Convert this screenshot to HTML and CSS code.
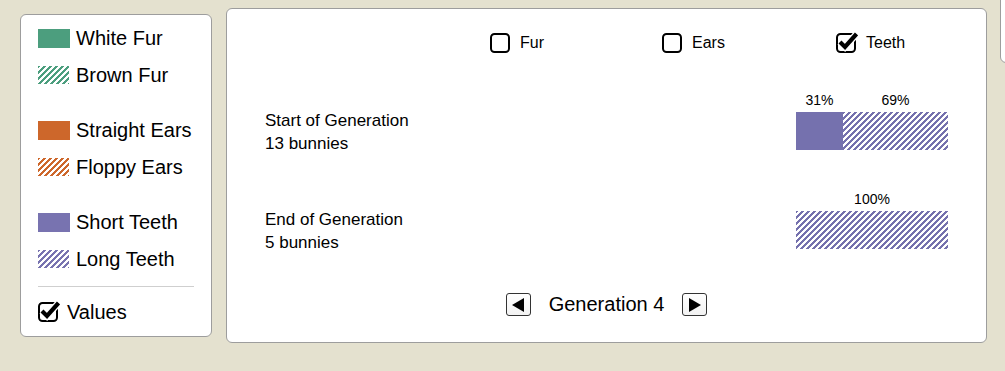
FILE: index.html
```html
<!DOCTYPE html>
<html lang="en">
<head>
    <meta charset="UTF-8">
    <title>Bunny Proportions</title>
    <link rel="stylesheet" href="styles.css">
</head>
<body>
    <div class="screen">
        <div class="panel legend">
            <div class="legend-item"><span class="swatch fur"></span>White Fur</div>
            <div class="legend-item"><span class="swatch fur hatch"></span>Brown Fur</div>
            <div class="legend-item group"><span class="swatch ears"></span>Straight Ears</div>
            <div class="legend-item"><span class="swatch ears hatch"></span>Floppy Ears</div>
            <div class="legend-item group"><span class="swatch teeth"></span>Short Teeth</div>
            <div class="legend-item"><span class="swatch teeth hatch"></span>Long Teeth</div>
            <hr class="divider">
            <div class="legend-item values">
                <svg class="checkbox" viewBox="0 0 22 22" width="22" height="22">
                    <rect x="1" y="3" width="18" height="18" rx="3.5" fill="none" stroke="#000" stroke-width="2"/>
                    <path d="M4 11 L9 16 L20.5 3" fill="none" stroke="#fff" stroke-width="7"/>
                    <path d="M4 11 L9 16 L20.5 3" fill="none" stroke="#000" stroke-width="4.2"/>
                </svg>
                Values
            </div>
        </div>

        <div class="panel main">
            <div class="toggles">
                <label class="toggle">
                    <svg class="checkbox" viewBox="0 0 22 22" width="22" height="22">
                        <rect x="1" y="3" width="18" height="18" rx="3.5" fill="none" stroke="#000" stroke-width="2"/>
                    </svg>
                    Fur
                </label>
                <label class="toggle">
                    <svg class="checkbox" viewBox="0 0 22 22" width="22" height="22">
                        <rect x="1" y="3" width="18" height="18" rx="3.5" fill="none" stroke="#000" stroke-width="2"/>
                    </svg>
                    Ears
                </label>
                <label class="toggle">
                    <svg class="checkbox" viewBox="0 0 22 22" width="22" height="22">
                        <rect x="1" y="3" width="18" height="18" rx="3.5" fill="none" stroke="#000" stroke-width="2"/>
                        <path d="M4 11 L9 16 L20.5 3" fill="none" stroke="#fff" stroke-width="7"/>
                        <path d="M4 11 L9 16 L20.5 3" fill="none" stroke="#000" stroke-width="4.2"/>
                    </svg>
                    Teeth
                </label>
            </div>

            <div class="gen-row">
                <div class="gen-label">Start of Generation<br>13 bunnies</div>
                <div class="bar-values">
                    <span style="width: 31%">31%</span>
                    <span style="width: 69%">69%</span>
                </div>
                <div class="bar">
                    <span class="seg solid" style="width: 31%"></span>
                    <span class="seg hatch" style="width: 69%"></span>
                </div>
            </div>

            <div class="gen-row second">
                <div class="gen-label">End of Generation<br>5 bunnies</div>
                <div class="bar-values">
                    <span style="width: 100%">100%</span>
                </div>
                <div class="bar">
                    <span class="seg hatch" style="width: 100%"></span>
                </div>
            </div>

            <div class="nav">
                <button class="nav-btn">
                    <svg viewBox="0 0 12 14" width="12" height="14"><path d="M0 7 L12 0 L12 14 Z" fill="#000"/></svg>
                </button>
                <span class="gen-title">Generation 4</span>
                <button class="nav-btn">
                    <svg viewBox="0 0 12 14" width="12" height="14"><path d="M12 7 L0 0 L0 14 Z" fill="#000"/></svg>
                </button>
            </div>
        </div>

        <div class="panel stub"></div>
    </div>
</body>
</html>
```

FILE: styles.css
```css
html, body {
    margin: 0;
    padding: 0;
    overflow: hidden;
}
body {
    font-family: "Liberation Sans", Arial, sans-serif;
    color: #000;
    background-color: rgb(228, 225, 207);
    width: 1005px;
    height: 371px;
}
.screen {
    display: flex;
    align-items: flex-start;
}
.panel {
    background-color: #fff;
    border: 1px solid #9d9d9d;
    border-radius: 6px;
    box-sizing: border-box;
    flex-shrink: 0;
}

/* legend */
.legend {
    margin-left: 20px;
    margin-top: 14px;
    width: 192px;
    height: 323px;
    padding: 11px 17px 0 17px;
}
.legend-item {
    display: flex;
    align-items: center;
    gap: 6px;
    height: 24px;
    font-size: 20px;
    margin-bottom: 13px;
}
.legend-item.group {
    margin-top: 31px;
}
.swatch {
    display: inline-block;
    width: 32px;
    height: 19px;
    flex-shrink: 0;
}
.fur { --c: #4c9e7e; background-color: var(--c); }
.ears { --c: #cd672b; background-color: var(--c); }
.teeth { --c: #7873b0; background-color: var(--c); }
.hatch {
    background: linear-gradient(135deg, var(--c) 25%, #fff 25%, #fff 50%, var(--c) 50%, var(--c) 75%, #fff 75%);
    background-size: 6px 6px;
}
.swatch.hatch {
    width: 31px;
    height: 18px;
    margin-right: 1px;
}
.divider {
    border: none;
    border-top: 1px solid #cfcfcf;
    margin: 15px 0 13px 0;
}
.legend-item.values {
    gap: 7px;
    margin-bottom: 0;
}
.checkbox {
    flex-shrink: 0;
    margin-top: -2px;
}

/* main panel */
.main {
    margin-left: 14px;
    margin-top: 8px;
    width: 761px;
    height: 335px;
    padding: 22px 38px 0 38px;
}
.toggles {
    display: flex;
    padding-left: 225px;
    height: 24px;
}
.toggle {
    display: flex;
    align-items: center;
    gap: 8px;
    font-size: 16px;
    width: 172px;
    flex-shrink: 0;
}
.toggle:nth-child(2) {
    width: 174px;
}
.toggle:last-child {
    width: auto;
}
.gen-row {
    display: grid;
    grid-template-columns: 1fr 152px;
    grid-template-rows: 16px 38px;
    row-gap: 4px;
    margin-top: 37px;
}
.gen-row.second {
    margin-top: 41px;
}
.gen-label {
    grid-column: 1;
    grid-row: 2;
    align-self: center;
    font-size: 17px;
    line-height: 23px;
    margin-top: 1px;
}
.bar-values {
    grid-column: 2;
    grid-row: 1;
    display: flex;
    font-size: 14px;
    line-height: 16px;
}
.bar-values span {
    text-align: center;
}
.bar {
    grid-column: 2;
    grid-row: 2;
    display: flex;
    --c: #7571ae;
}
.seg {
    height: 100%;
}
.seg.solid {
    background-color: var(--c);
}
.nav {
    display: flex;
    justify-content: center;
    align-items: center;
    gap: 18px;
    margin-top: 44px;
}
.nav-btn {
    width: 25px;
    height: 23px;
    padding: 0;
    border: 1px solid #333;
    border-radius: 3px;
    background: linear-gradient(#fff, #f2f2f2);
    display: flex;
    align-items: center;
    justify-content: center;
}
.gen-title {
    font-size: 20px;
}
.stub {
    margin-left: 13px;
    margin-top: -10px;
    width: 30px;
    height: 73px;
}
```
